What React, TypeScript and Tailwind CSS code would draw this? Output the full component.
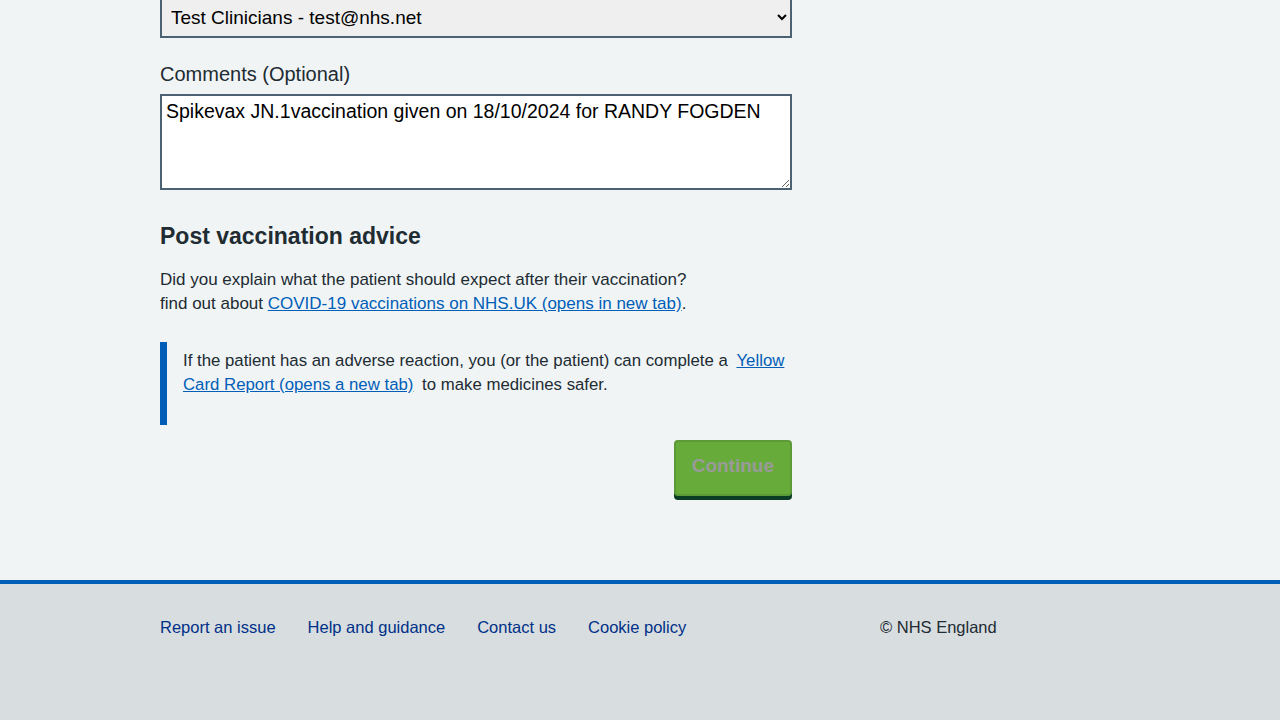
import { useState } from 'react';

const FONT = { fontFamily: '"Liberation Sans", Arial, sans-serif' };

const footerLinks = ['Report an issue', 'Help and guidance', 'Contact us', 'Cookie policy'];

export default function App() {
  const [comment, setComment] = useState(
    'Spikevax JN.1vaccination given on 18/10/2024 for RANDY FOGDEN'
  );

  return (
    <div className="min-h-[720px] flex flex-col bg-[#f0f4f5] text-[#212b32] overflow-hidden" style={FONT}>
      {/* Main form */}
      <main className="flex-1 pl-[160px]">
        <div className="w-[632px] pb-[80px]">
          <select className="mt-[-3px] block w-full h-[41px] border-2 border-[#4c6272] bg-[#efefef] pl-[5px] pr-[4px] text-[19px] text-black">
            <option>Test Clinicians - test@nhs.net</option>
          </select>

          <label className="block mt-[24px] text-[20px] leading-[24px]">Comments (Optional)</label>
          <textarea
            value={comment}
            onChange={e => setComment(e.target.value)}
            className="block mt-[8px] w-full h-[96px] border-2 border-[#4c6272] bg-white px-[4px] py-[1px] text-[19.5px] leading-[28px] text-black"
          />

          <h2 className="mt-[30px] text-[23px] leading-[32px] font-bold">Post vaccination advice</h2>

          <p className="mt-[16px] text-[17px] leading-[24px]">
            Did you explain what the patient should expect after their vaccination?
            <br />
            find out about{' '}
            <a href="#" className="text-[#005eb8] underline">
              COVID-19 vaccinations on NHS.UK (opens in new tab)
            </a>
            .
          </p>

          <div className="mt-[26px] border-l-[7px] border-[#005eb8] pl-[16px] pt-[7px] pb-[28px] text-[16.8px] leading-[24px]">
            If the patient has an adverse reaction, you (or the patient) can complete a{' '}
            <a href="#" className="ml-[4px] mr-[4px] text-[#005eb8] underline">
              Yellow Card Report (opens a new tab)
            </a>{' '}
            to make medicines safer.
          </div>

          <div className="mt-[15px] flex justify-end">
            <button className="h-[56px] px-[16px] pb-[3px] rounded-[4px] border-2 border-[#5c9a37] bg-[#67ab3b] text-[19px] font-bold text-[#9a9a9a] shadow-[0_4px_0_#0b3d24]">
              Continue
            </button>
          </div>
        </div>
      </main>

      {/* Footer */}
      <footer className="h-[140px] border-t-4 border-[#005eb8] bg-[#d8dde0]">
        <div className="ml-[160px] w-[960px] pt-[31px] flex">
          <ul className="w-[720px] flex gap-[32px] text-[16.5px] leading-[24px]">
            {footerLinks.map(l => (
              <li key={l}>
                <a href="#" className="text-[#003087]">{l}</a>
              </li>
            ))}
          </ul>
          <p className="text-[16.5px] leading-[24px] text-[#212b32]">© NHS England</p>
        </div>
      </footer>
    </div>
  );
}
